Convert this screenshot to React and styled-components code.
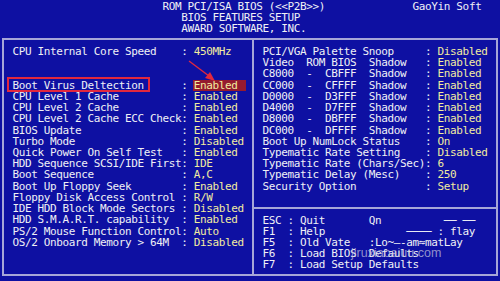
import React from 'react';
import styled, { createGlobalStyle } from 'styled-components';

const COL = 6.25;
const ROW = 11.24;

const GlobalStyle = createGlobalStyle`
  html, body {
    margin: 0;
    padding: 0;
    background: #0e10a2;
  }
`;

const Screen = styled.div`
  position: relative;
  width: 500px;
  height: 281px;
  overflow: hidden;
  background: #0e10a2;
  color: #f0f0f6;
  font-family: "DejaVu Sans Mono", "Liberation Mono", monospace;
  font-size: 11px;
  letter-spacing: -0.37px;
  line-height: ${ROW}px;
  white-space: pre;
`;

const Header = styled.header`
  box-sizing: border-box;
  height: ${ROW * 3}px;
  padding-top: 1px;
`;

const Line = styled.div`
  height: ${ROW}px;
  padding-left: ${p => p.$indent * COL}px;
`;

const Frame = styled.div`
  display: flex;
  box-sizing: border-box;
  width: 496px;
  height: 238px;
  margin: 4.6px 0 0 2px;
  border: 2px solid #a6a6d8;
`;

const LeftPane = styled.section`
  box-sizing: border-box;
  width: 250px;
  padding: 5.6px 0 0 8.5px;
  border-right: 2px solid #a6a6d8;
`;

const RightPane = styled.section`
  flex: 1;
  display: flex;
  flex-direction: column;
`;

const RightTop = styled.div`
  box-sizing: border-box;
  height: 168.2px;
  padding: 5.6px 0 0 8.5px;
  border-bottom: 2px solid #a6a6d8;
`;

const RightBottom = styled.div`
  padding: 6px 0 0 8.5px;
`;

const Row = styled.div`
  display: flex;
  height: ${ROW}px;
`;

const Blank = styled.div`
  height: ${p => p.$rows * ROW}px;
`;

const Label = styled.span`
  width: ${p => p.$w * COL}px;
  flex-shrink: 0;
`;

const Sep = styled.span`
  width: ${2 * COL}px;
  flex-shrink: 0;
`;

const Value = styled.span`
  color: #f2eca0;
  background: ${p => (p.$hl ? '#951a2e' : 'transparent')};
  margin-left: ${p => (p.$hl ? '-1px' : '0')};
  padding: ${p => (p.$hl ? '0 8px 0 1px' : '0')};
`;

const KeyRow = styled.div`
  height: ${ROW}px;
`;

const Mark = styled.div`
  position: absolute;
  left: 7px;
  top: 77px;
  width: 143px;
  height: 15px;
  box-sizing: border-box;
  border: 2px solid #e2283e;
`;

const Arrow = styled.svg`
  position: absolute;
  left: 0;
  top: 0;
  pointer-events: none;
`;

const Watermark = styled.div`
  position: absolute;
  left: 351px;
  top: 246px;
  font-family: "Liberation Sans", Arial, sans-serif;
  font-size: 12.5px;
  letter-spacing: 0;
  line-height: 14px;
  color: rgba(196, 196, 222, 0.72);
`;

const leftRows = [
  ['Boot Virus Deltection', 'Enabled', true],
  ['CPU Level 1 Cache', 'Enabled'],
  ['CPU Level 2 Cache', 'Enabled'],
  ['CPU Level 2 Cache ECC Check', 'Enabled'],
  ['BIOS Update', 'Enabled'],
  ['Turbo Mode', 'Disabled'],
  ['Quick Power On Self Test', 'Enabled'],
  ['HDD Sequence SCSI/IDE First', 'IDE'],
  ['Boot Sequence', 'A,C'],
  ['Boot Up Floppy Seek', 'Enabled'],
  ['Floppy Disk Access Control', 'R/W'],
  ['IDE HDD Block Mode Sectors', 'Disabled'],
  ['HDD S.M.A.R.T. capability', 'Enabled'],
  ['PS/2 Mouse Function Control', 'Auto'],
  ['OS/2 Onboard Memory > 64M', 'Disabled'],
];

const rightRows = [
  ['PCI/VGA Palette Snoop', 'Disabled'],
  ['Video  ROM BIOS  Shadow', 'Enabled'],
  ['C8000  -  CBFFF  Shadow', 'Enabled'],
  ['CC000  -  CFFFF  Shadow', 'Enabled'],
  ['D0000  -  D3FFF  Shadow', 'Enabled'],
  ['D4000  -  D7FFF  Shadow', 'Enabled'],
  ['D8000  -  DBFFF  Shadow', 'Enabled'],
  ['DC000  -  DFFFF  Shadow', 'Enabled'],
  ['Boot Up NumLock Status', 'On'],
  ['Typematic Rate Setting', 'Disabled'],
  ['Typematic Rate (Chars/Sec)', '6'],
  ['Typematic Delay (Mesc)', '250'],
  ['Security Option', 'Setup'],
];

const keys = [
  'ESC : Quit       Qn          ── ──',
  'F1  : Help             ──── : flay',
  'F5  : Old Vate   :Lo~—-am≈matLay',
  'F6  : Load BIOS  Defaults',
  'F7  : Load Setup Defaults',
];

const Setting = ({ w, label, value, hl }) => (
  <Row>
    <Label $w={w}>{label}</Label>
    <Sep>: </Sep>
    <Value $hl={hl}>{value}</Value>
  </Row>
);

const App = () => {
  return (
    <Screen>
      <GlobalStyle />
      <Header>
        <Line $indent={26}>{'ROM PCI/ISA BIOS (<<P2B>>)              GaoYin Soft'}</Line>
        <Line $indent={29}>BIOS FEATURES SETUP</Line>
        <Line $indent={29}>AWARD SOFTWARE, INC.</Line>
      </Header>
      <Frame>
        <LeftPane>
          <Setting w={27} label="CPU Internal Core Speed" value="450MHz" />
          <Blank $rows={2} />
          {leftRows.map(([label, value, hl]) => (
            <Setting key={label} w={27} label={label} value={value} hl={hl} />
          ))}
        </LeftPane>
        <RightPane>
          <RightTop>
            {rightRows.map(([label, value]) => (
              <Setting key={label} w={26} label={label} value={value} />
            ))}
          </RightTop>
          <RightBottom>
            {keys.map(k => (
              <KeyRow key={k}>{k}</KeyRow>
            ))}
          </RightBottom>
        </RightPane>
      </Frame>
      <Mark />
      <Arrow width="500" height="281" viewBox="0 0 500 281">
        <line x1="189" y1="61" x2="209" y2="76" stroke="#e2283e" strokeWidth="1.3" />
        <polygon points="215,81 205,78 210,72" fill="#e2283e" />
      </Arrow>
      <Watermark>jiruxiaoaiuu.com</Watermark>
    </Screen>
  );
};

export default App;
